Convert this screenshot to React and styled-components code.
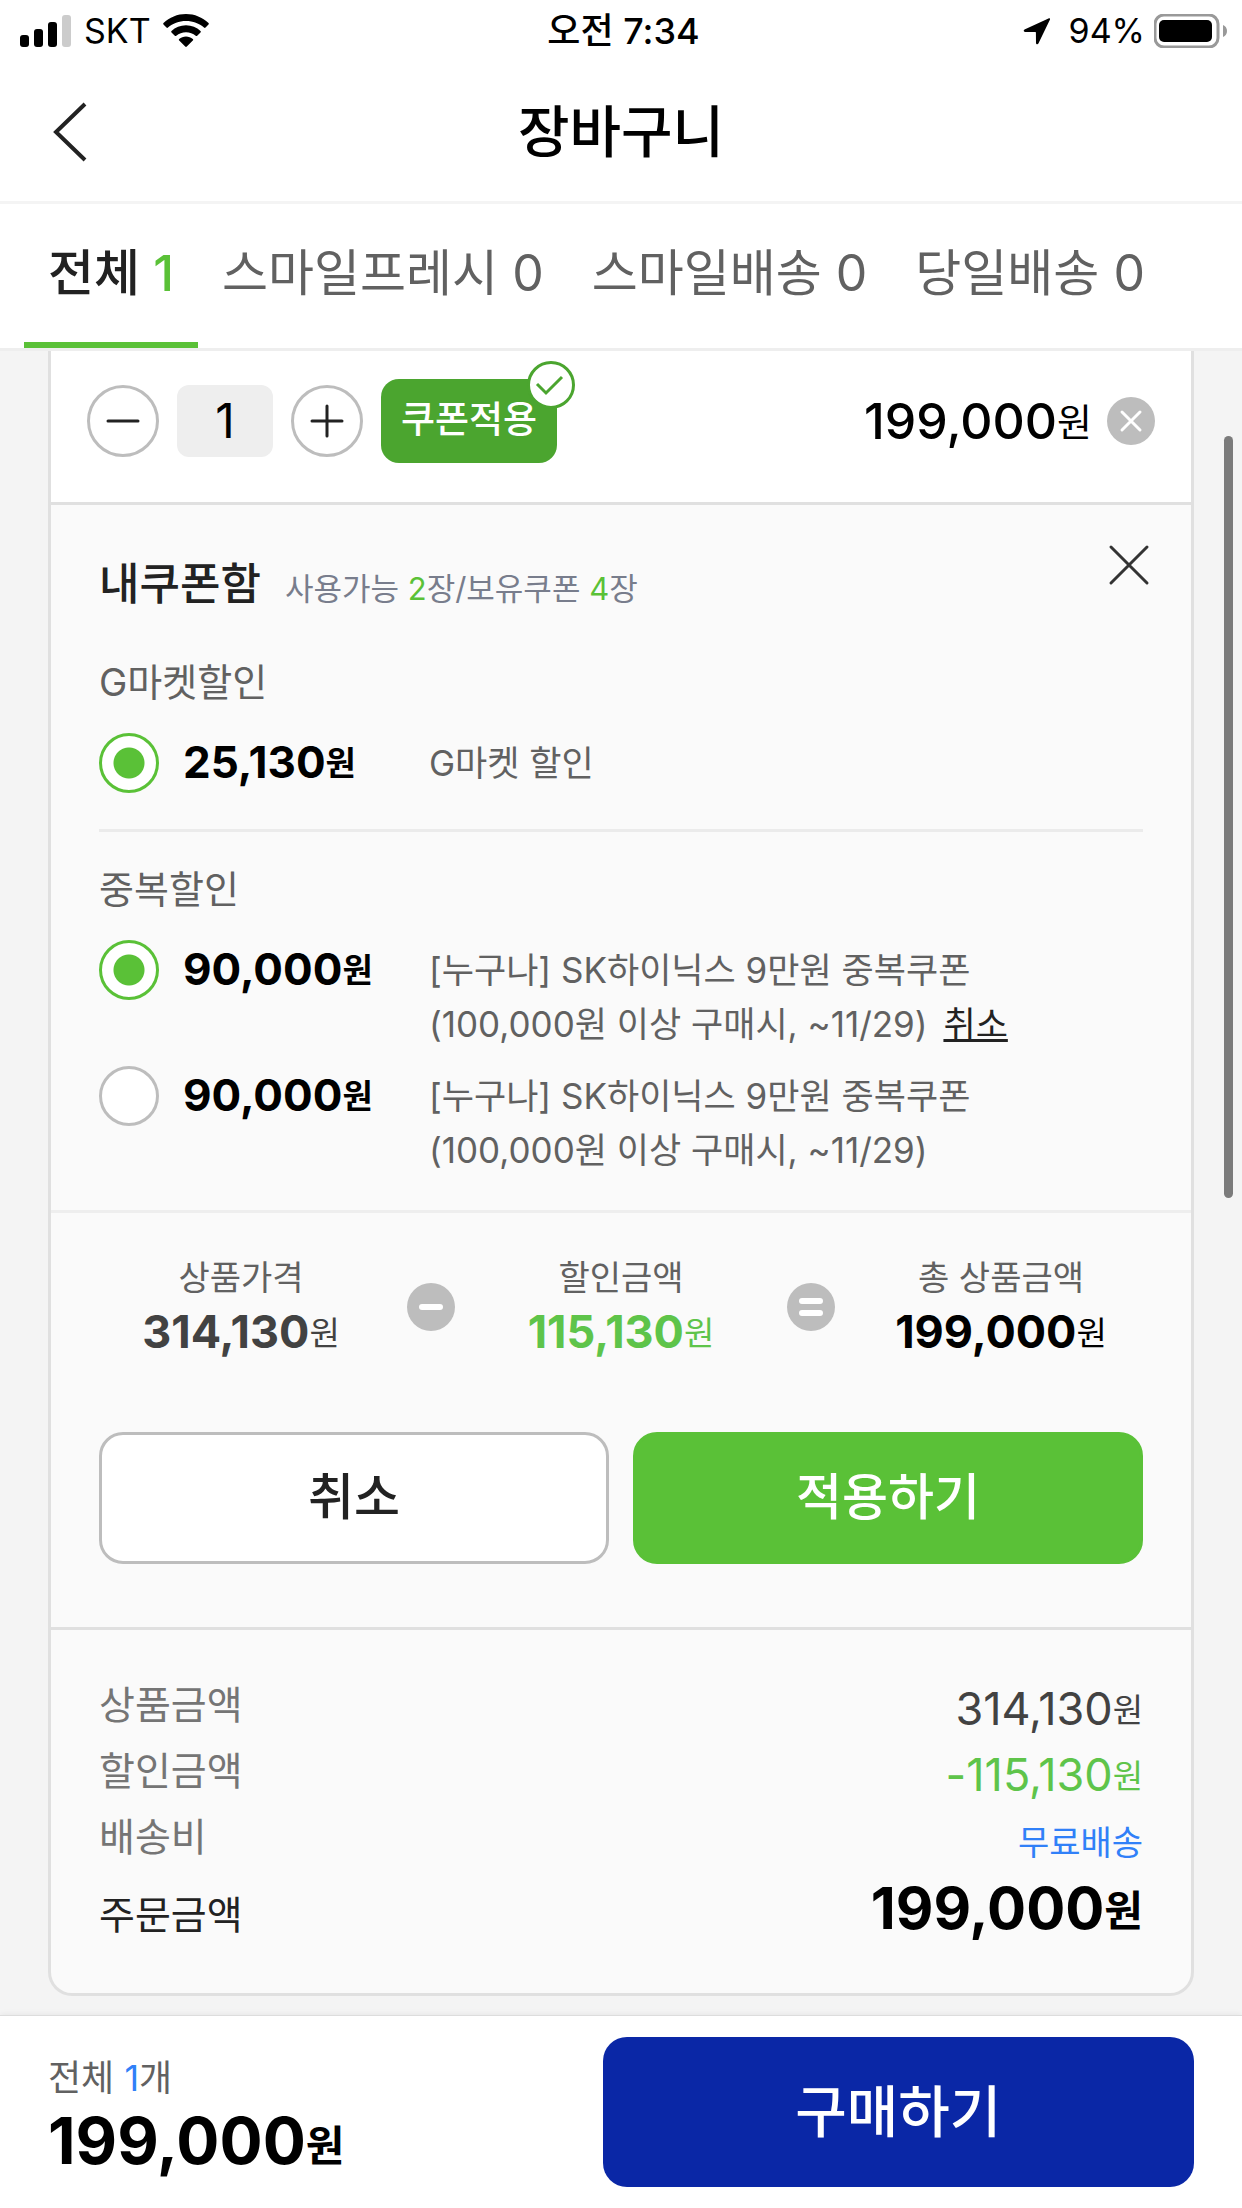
import React, { useState } from "react";
import styled, { createGlobalStyle } from "styled-components";

const GlobalStyle = createGlobalStyle`
  * {
    box-sizing: border-box;
  }
  body {
    margin: 0;
    background: #f4f4f4;
    font-family: Inter, "Noto Sans CJK KR", sans-serif;
    color: #222;
  }
  button,
  input {
    margin: 0;
    padding: 0;
    border: 0;
    background: none;
    font-family: inherit;
    color: inherit;
  }
  h1, h2, h3, p, dl, dd {
    margin: 0;
  }
`;

const Page = styled.div`
  display: flex;
  flex-direction: column;
  min-height: 100vh;
`;

const StatusBar = styled.div`
  display: grid;
  grid-template-columns: 1fr auto 1fr;
  align-items: center;
  height: 60px;
  padding: 2px 15px 0 20px;
  background: #fff;
  color: #000;
  font-size: 34px;
  line-height: 48px;
`;

const StatusSide = styled.div`
  display: flex;
  align-items: center;
  justify-content: ${(props) => (props.$end ? "flex-end" : "flex-start")};
  gap: ${(props) => (props.$end ? 9 : 12)}px;
`;

const Clock = styled.span`
  font-size: 36px;
  font-weight: 500;
`;

const LocationArrow = styled.svg`
  margin-right: 9px;
`;

const Header = styled.header`
  display: grid;
  grid-template-columns: 1fr auto 1fr;
  align-items: center;
  height: 144px;
  padding: 2px 48px 0;
  background: #fff;
  border-bottom: 3px solid #f4f4f4;
`;

const BackButton = styled.button`
  display: flex;
  align-items: center;
  width: 48px;
  height: 66px;
`;

const PageTitle = styled.h1`
  color: #000;
  font-size: 56px;
  font-weight: 500;
  line-height: 72px;
`;

const Tabs = styled.nav`
  display: flex;
  height: 147px;
  padding: 0 24px;
  background: #fff;
  border-bottom: 3px solid #eee;
`;

const Tab = styled.button`
  padding: 0 24px;
  font-size: 50px;
  font-weight: ${(props) => (props.$active ? 500 : 400)};
  line-height: 72px;
  white-space: nowrap;
  color: ${(props) => (props.$active ? "#222" : "#616161")};
  border-bottom: 6px solid ${(props) => (props.$active ? "#5ac137" : "transparent")};
`;

const Point = styled.span`
  color: ${(props) => props.$color || "#5ac137"};
`;

const Main = styled.main`
  position: relative;
  flex: 1;
  padding: 0 48px 18px;
`;

const ScrollThumb = styled.div`
  position: absolute;
  top: 85px;
  right: 9px;
  width: 9px;
  height: 762px;
  border-radius: 5px;
  background: #7b7b7b;
`;

const Card = styled.section`
  background: #fafafa;
  border: 3px solid #e0e0e0;
  border-top: 0;
  border-radius: 0 0 24px 24px;
`;

const ItemRow = styled.div`
  display: flex;
  align-items: center;
  gap: 18px;
  height: 154px;
  padding: 0 36px 12px;
  background: #fff;
  border-bottom: 3px solid #e0e0e0;
`;

const RoundButton = styled.button`
  display: flex;
  align-items: center;
  justify-content: center;
  width: 72px;
  height: 72px;
  background: #fff;
  border: 3px solid #bdbdbd;
  border-radius: 50%;
`;

const Quantity = styled.input`
  width: 96px;
  height: 72px;
  background: #eee;
  border-radius: 12px;
  color: #000;
  font-size: 48px;
  text-align: center;
`;

const CouponButton = styled.button`
  position: relative;
  height: 84px;
  padding: 0 20px 2px;
  background: #4ba52f;
  border-radius: 18px;
  color: #fff;
  font-size: 37px;
  font-weight: 500;
  line-height: 48px;
`;

const CheckBadge = styled.span`
  position: absolute;
  top: -18px;
  right: -18px;
  width: 48px;
  height: 48px;
`;

const ItemPrice = styled.div`
  margin-left: auto;
`;

const Price = styled.span`
  display: inline-block;
  height: 54px;
  font-size: ${(props) => props.$size}px;
  font-weight: ${(props) => props.$weight || 400};
  line-height: 54px;
  color: ${(props) => props.$color || "#000"};
  white-space: nowrap;
`;

const Won = styled.span`
  font-size: ${(props) => props.$size}px;
  font-weight: ${(props) => props.$weight || 400};
  line-height: 1;
  vertical-align: 3px;
`;

const DeleteButton = styled.button`
  display: flex;
  width: 48px;
  height: 48px;
  margin-left: -3px;
`;

const CouponBox = styled.div`
  padding: 40px 48px 0;
`;

const CouponHead = styled.div`
  display: flex;
  align-items: flex-start;
  justify-content: space-between;
  height: 68px;
  margin-right: -6px;
`;

const CouponTitle = styled.div`
  display: flex;
  align-items: baseline;
  gap: 24px;
  padding-top: 12px;
`;

const TitleText = styled.h2`
  font-size: 44px;
  font-weight: 500;
  line-height: 54px;
`;

const CouponCount = styled.p`
  color: #787d8c;
  font-size: 31px;
  line-height: 54px;
`;

const CloseButton = styled.button`
  display: flex;
  width: 40px;
  height: 40px;
`;

const CouponGroup = styled.fieldset`
  margin: 0;
  padding: ${(props) => (props.$divided ? "33px 0" : "45px 0 36px")};
  border: 0;
  border-top: ${(props) => (props.$divided ? "3px solid #ebebeb" : "0")};
`;

const GroupTitle = styled.h3`
  height: 48px;
  margin-bottom: 27px;
  color: #616161;
  font-size: 38px;
  font-weight: 400;
  line-height: 48px;
`;

const CouponRow = styled.div`
  display: grid;
  grid-template-columns: 60px 222px 1fr;
  column-gap: 24px;

  & + & {
    margin-top: 15px;
  }
`;

const Radio = styled.input`
  appearance: none;
  width: 60px;
  height: 60px;
  background: #fff;
  border: 3px solid #bdbdbd;
  border-radius: 50%;

  &:checked {
    border-color: #5ac137;
    background: radial-gradient(circle, #5ac137 15px, #fff 16px);
  }
`;

const CouponLabel = styled.label`
  padding-top: 2px;
`;

const CouponDesc = styled.p`
  padding-top: 3px;
  color: #616161;
  font-size: 35px;
  line-height: 54px;
`;

const CancelLink = styled.a`
  margin-left: 6px;
  color: #222;
  text-decoration: underline;
  text-decoration-thickness: 3px;
`;

const Formula = styled.div`
  display: flex;
  align-items: center;
  padding: 41px 24px 0;
  border-top: 3px solid #eee;
`;

const FormulaItem = styled.div`
  display: flex;
  flex: 1;
  flex-direction: column;
  align-items: center;
  gap: 3px;
`;

const FormulaLabel = styled.span`
  height: 48px;
  color: #616161;
  font-size: 34px;
  line-height: 48px;
`;

const Buttons = styled.div`
  display: flex;
  gap: 24px;
  padding: 73px 48px 63px;
`;

const ActionButton = styled.button`
  flex: 1;
  height: 132px;
  padding-bottom: 10px;
  border-radius: 24px;
  background: ${(props) => (props.$primary ? "#5ac137" : "#fff")};
  border: 3px solid ${(props) => (props.$primary ? "#5ac137" : "#bdbdbd")};
  color: ${(props) => (props.$primary ? "#fff" : "#222")};
  font-size: 50px;
  font-weight: 500;
`;

const Summary = styled.dl`
  padding: 42px 48px 33px;
  border-top: 3px solid #e0e0e0;
`;

const SummaryRow = styled.div`
  display: flex;
  align-items: center;
  justify-content: space-between;
  height: ${(props) => (props.$total ? 90 : 66)}px;
  color: ${(props) => (props.$total ? "#222" : "#757575")};
  font-size: 39px;
  line-height: 54px;

  dd {
    padding: ${(props) => (props.$total ? "0 0 8px" : "10px 0 0")};
  }
`;

const FreeShipping = styled.span`
  color: #3080f8;
  font-size: 34px;
`;

const Footer = styled.footer`
  display: flex;
  align-items: center;
  justify-content: space-between;
  height: 193px;
  padding: 0 48px;
  background: #fff;
  border-top: 1px solid #ddd;
  box-shadow: 0 -1px 6px rgba(0, 0, 0, 0.06);
`;

const FooterInfo = styled.div`
  display: flex;
  flex-direction: column;
  gap: 12px;
  padding-bottom: 2px;
`;

const FooterCount = styled.span`
  color: #616161;
  font-size: 36px;
  line-height: 48px;
`;

const BuyButton = styled.button`
  width: 51.6%;
  height: 150px;
  padding-bottom: 10px;
  background: #0a27a6;
  border-radius: 24px;
  color: #fff;
  font-size: 56px;
  font-weight: 500;
`;

const tabs = [
  { name: "전체", count: 1 },
  { name: "스마일프레시", count: 0 },
  { name: "스마일배송", count: 0 },
  { name: "당일배송", count: 0 },
];

const SignalIcon = () => (
  <svg width="52" height="32" viewBox="0 0 52 32">
    <rect x="0" y="20" width="9" height="12" rx="3" />
    <rect x="14" y="14" width="9" height="18" rx="3" />
    <rect x="28" y="7" width="9" height="25" rx="3" />
    <rect x="42" y="0" width="9" height="32" rx="3" fill="#ccc" />
  </svg>
);

const WifiIcon = () => (
  <svg width="46" height="34" viewBox="0 0 46 34">
    <path d="M23 0C14.400 0 6.400 3.400.500 9c-.500.500-.500 1.100 0 1.600l3 3c.400.400 1 .400 1.500 0C9.700 9.600 16 7.100 23 7.100s13.300 2.500 18 6.500c.500.400 1.100.400 1.500 0l3-3c.500-.500.500-1.100 0-1.600C39.600 3.400 31.600 0 23 0z" />
    <path d="M23 11.300c-5.600 0-10.700 2.200-14.500 5.700-.500.500-.500 1.100 0 1.600l3.300 3.200c.400.400 1 .400 1.500 0 2.600-2.300 6-3.600 9.700-3.600s7.100 1.300 9.700 3.600c.500.400 1.100.400 1.500 0l3.300-3.200c.500-.500.500-1.100 0-1.600-3.800-3.500-8.900-5.700-14.500-5.700z" />
    <path d="M23 22.500c-2.600 0-5 1-6.800 2.500-.500.400-.500 1.100 0 1.500l6 6c.500.500 1.100.500 1.600 0l6-6c.500-.400.500-1.100 0-1.500-1.800-1.500-4.200-2.500-6.800-2.500z" />
  </svg>
);

const LocationIcon = () => (
  <LocationArrow width="28" height="28" viewBox="0 0 28 28">
    <path d="M26 1.200 1.500 12.600c-1.300.600-.900 2.400.500 2.400l10.400.100c.3 0 .5.200.5.500l.1 10.300c0 1.400 1.900 1.800 2.400.500L27 2.500c.3-.9-.3-1.600-1-1.300z" />
  </LocationArrow>
);

const BatteryIcon = () => (
  <svg width="73" height="34" viewBox="0 0 73 34">
    <rect x="1" y="1" width="63" height="32" rx="9" fill="none" stroke="#999" strokeWidth="3" />
    <rect x="5" y="6" width="53" height="22" rx="5" />
    <path d="M69 11c2.500 1 4 3.300 4 6s-1.500 5-4 6z" fill="#999" />
  </svg>
);

const StrokeIcon = ({ size, d, color = "#222", width = 3, bg }) => (
  <svg width={size} height={size} viewBox={`0 0 ${size} ${size}`} fill="none" overflow="visible">
    {bg && <circle cx={size / 2} cy={size / 2} r={size / 2} fill={bg} />}
    <path d={d} stroke={color} strokeWidth={width} strokeLinecap="round" />
  </svg>
);

const Coupon = ({ id, group, amount, checked, onChange, children }) => (
  <CouponRow>
    <Radio type="radio" id={id} name={group} checked={checked} onChange={onChange} />
    <CouponLabel htmlFor={id}>
      <Price $size={44} $weight={700}>
        {amount}
        <Won $size={33} $weight={700}>원</Won>
      </Price>
    </CouponLabel>
    <CouponDesc>{children}</CouponDesc>
  </CouponRow>
);

const App = () => {
  const [active, setActive] = useState("전체");
  const [quantity, setQuantity] = useState(1);
  const [extra, setExtra] = useState("extra-1");

  return (
    <Page>
      <GlobalStyle />
      <StatusBar>
        <StatusSide>
          <SignalIcon />
          <span>SKT</span>
          <WifiIcon />
        </StatusSide>
        <Clock>오전 7:34</Clock>
        <StatusSide $end>
          <LocationIcon />
          <span>94%</span>
          <BatteryIcon />
        </StatusSide>
      </StatusBar>

      <Header>
        <BackButton aria-label="뒤로">
          <svg width="44" height="60" viewBox="0 0 44 60" fill="none">
            <path d="M37 2 8 30l29 28" stroke="#222" strokeWidth="4" />
          </svg>
        </BackButton>
        <PageTitle>장바구니</PageTitle>
      </Header>

      <Tabs>
        {tabs.map((tab) => (
          <Tab key={tab.name} $active={tab.name === active} onClick={() => setActive(tab.name)}>
            {tab.name}{" "}
            {tab.name === active ? <Point>{tab.count}</Point> : tab.count}
          </Tab>
        ))}
      </Tabs>

      <Main>
        <Card>
          <ItemRow>
            <RoundButton aria-label="수량 빼기" onClick={() => setQuantity(Math.max(1, quantity - 1))}>
              <StrokeIcon size={36} d="M3 18h30" />
            </RoundButton>
            <Quantity
              aria-label="수량"
              value={quantity}
              onChange={(e) => setQuantity(Number(e.target.value) || 1)}
            />
            <RoundButton aria-label="수량 더하기" onClick={() => setQuantity(quantity + 1)}>
              <StrokeIcon size={36} d="M3 18h30M18 3v30" />
            </RoundButton>
            <CouponButton>
              쿠폰적용
              <CheckBadge>
                <svg width="48" height="48" viewBox="0 0 48 48" fill="none">
                  <circle cx="24" cy="24" r="22.500" fill="#fff" stroke="#4ba52f" strokeWidth="3" />
                  <path d="m10 23 9 9 16-16" stroke="#4ba52f" strokeWidth="3" />
                </svg>
              </CheckBadge>
            </CouponButton>
            <ItemPrice>
              <Price $size={50} $weight={500}>
                199,000<Won $size={38}>원</Won>
              </Price>
            </ItemPrice>
            <DeleteButton aria-label="상품 삭제">
              <StrokeIcon size={48} d="m15 15 18 18M33 15 15 33" color="#fff" bg="#bdbdbd" />
            </DeleteButton>
          </ItemRow>

          <CouponBox>
            <CouponHead>
              <CouponTitle>
                <TitleText>내쿠폰함</TitleText>
                <CouponCount>
                  사용가능 <Point>2</Point>장/보유쿠폰 <Point>4</Point>장
                </CouponCount>
              </CouponTitle>
              <CloseButton aria-label="닫기">
                <StrokeIcon size={40} d="m2 2 36 36M38 2 2 38" color="#333" />
              </CloseButton>
            </CouponHead>

            <CouponGroup>
              <GroupTitle>G마켓할인</GroupTitle>
              <Coupon id="gmarket" group="gmarket" amount="25,130" checked onChange={() => {}}>
                G마켓 할인
              </Coupon>
            </CouponGroup>

            <CouponGroup $divided>
              <GroupTitle>중복할인</GroupTitle>
              <Coupon
                id="extra-1"
                group="extra"
                amount="90,000"
                checked={extra === "extra-1"}
                onChange={() => setExtra("extra-1")}
              >
                [누구나] SK하이닉스 9만원 중복쿠폰
                <br />
                (100,000원 이상 구매시, ~11/29) <CancelLink href="#cancel">취소</CancelLink>
              </Coupon>
              <Coupon
                id="extra-2"
                group="extra"
                amount="90,000"
                checked={extra === "extra-2"}
                onChange={() => setExtra("extra-2")}
              >
                [누구나] SK하이닉스 9만원 중복쿠폰
                <br />
                (100,000원 이상 구매시, ~11/29)
              </Coupon>
            </CouponGroup>
          </CouponBox>

          <Formula>
            <FormulaItem>
              <FormulaLabel>상품가격</FormulaLabel>
              <Price $size={45} $weight={700} $color="#424242">
                314,130<Won $size={33}>원</Won>
              </Price>
            </FormulaItem>
            <StrokeIcon size={48} d="M15 24h18" color="#fff" width={6} bg="#bdbdbd" />
            <FormulaItem>
              <FormulaLabel>할인금액</FormulaLabel>
              <Price $size={45} $weight={700} $color="#5ec44a">
                115,130<Won $size={33}>원</Won>
              </Price>
            </FormulaItem>
            <StrokeIcon size={48} d="M15 18h18M15 30h18" color="#fff" width={6} bg="#bdbdbd" />
            <FormulaItem>
              <FormulaLabel>총 상품금액</FormulaLabel>
              <Price $size={45} $weight={700}>
                199,000<Won $size={33}>원</Won>
              </Price>
            </FormulaItem>
          </Formula>

          <Buttons>
            <ActionButton>취소</ActionButton>
            <ActionButton $primary>적용하기</ActionButton>
          </Buttons>

          <Summary>
            <SummaryRow>
              <dt>상품금액</dt>
              <dd>
                <Price $size={45} $color="#424242">
                  314,130<Won $size={33}>원</Won>
                </Price>
              </dd>
            </SummaryRow>
            <SummaryRow>
              <dt>할인금액</dt>
              <dd>
                <Price $size={45} $color="#5ec44a">
                  -115,130<Won $size={33}>원</Won>
                </Price>
              </dd>
            </SummaryRow>
            <SummaryRow>
              <dt>배송비</dt>
              <dd>
                <FreeShipping>무료배송</FreeShipping>
              </dd>
            </SummaryRow>
            <SummaryRow $total>
              <dt>주문금액</dt>
              <dd>
                <Price $size={58} $weight={700}>
                  199,000<Won $size={42} $weight={700}>원</Won>
                </Price>
              </dd>
            </SummaryRow>
          </Summary>
        </Card>
        <ScrollThumb />
      </Main>

      <Footer>
        <FooterInfo>
          <FooterCount>
            전체 <Point $color="#3080f8">1</Point>개
          </FooterCount>
          <Price $size={64} $weight={700}>
            199,000<Won $size={42} $weight={700}>원</Won>
          </Price>
        </FooterInfo>
        <BuyButton>구매하기</BuyButton>
      </Footer>
    </Page>
  );
};

export default App;
